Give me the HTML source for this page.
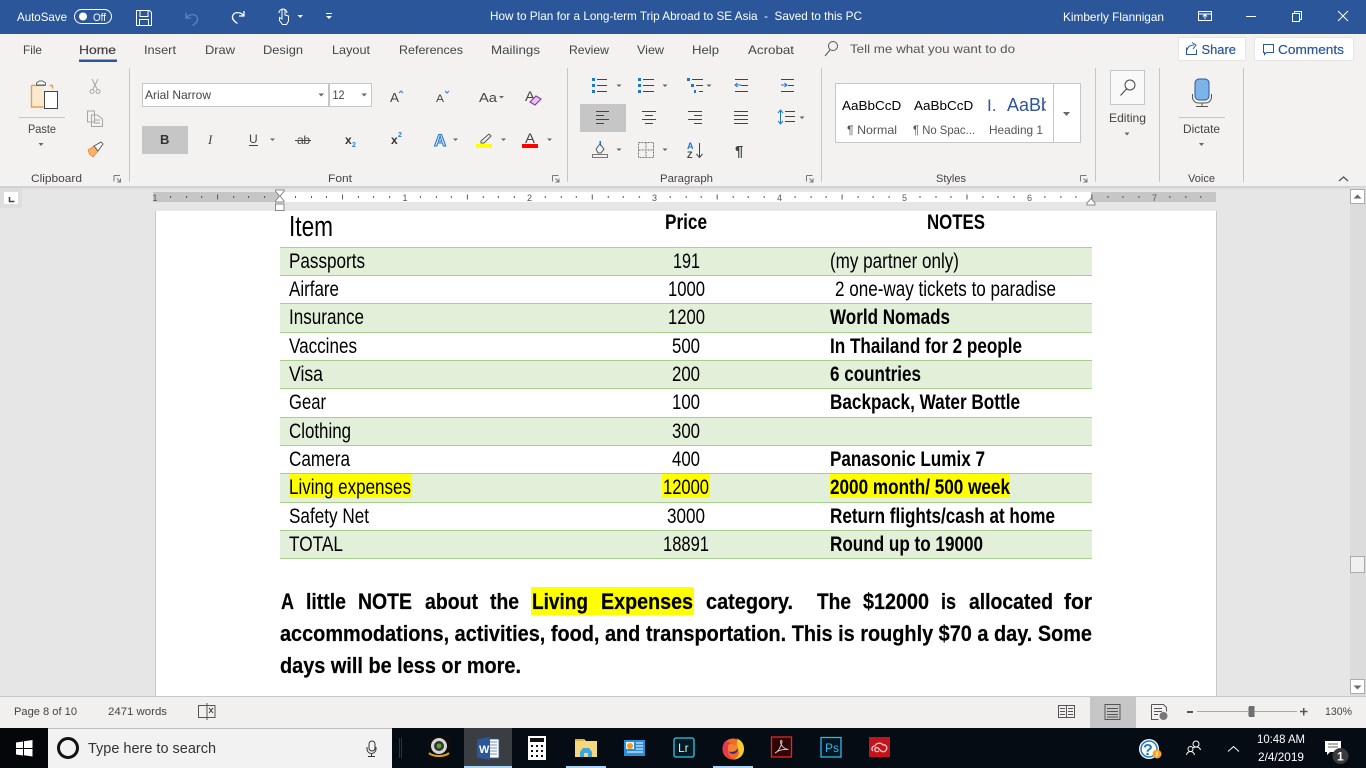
<!DOCTYPE html>
<html lang="en"><head><meta charset="utf-8"><title>Word</title>
<style>
html,body{margin:0;padding:0;width:1366px;height:768px;overflow:hidden;background:#e6e6e6}
svg{display:block;position:absolute;left:0;top:0}
text{font-family:"Liberation Sans",sans-serif;white-space:pre}
.r{font-size:12px;fill:#444}
.w{font-size:12px;fill:#fff}
.g{font-size:11px;fill:#444}
.d{font-family:"Liberation Sans Narrow","Liberation Sans",sans-serif;font-size:21px;fill:#000}
.b{font-weight:bold}
.p{font-size:22px;stroke:#000;stroke-width:.2}
.rn{font-size:9px;fill:#555}
.ic{fill:none;stroke:#444;stroke-width:1}
.cr{fill:#666}
</style></head><body>
<svg width="1366" height="768" viewBox="0 0 1366 768" xmlns="http://www.w3.org/2000/svg">
<defs>
<pattern id="rul" patternUnits="userSpaceOnUse" x="280" y="192" width="124.9" height="10">
<rect x="15" y="4" width="1" height="2" fill="#555"/><rect x="31" y="4" width="1" height="2" fill="#555"/><rect x="46" y="4" width="1" height="2" fill="#555"/>
<rect x="62" y="2.500" width="1" height="5" fill="#555"/>
<rect x="78" y="4" width="1" height="2" fill="#555"/><rect x="93" y="4" width="1" height="2" fill="#555"/><rect x="109" y="4" width="1" height="2" fill="#555"/>
</pattern>
</defs>

<!-- canvas & chrome backgrounds -->
<rect width="1366" height="768" fill="#e6e6e6"/>
<rect width="1366" height="34" fill="#2b579a"/>
<rect y="34" width="1366" height="152" fill="#f3f2f1"/>
<rect y="186" width="1366" height="2" fill="#d2d2d2"/>
<rect y="188" width="1366" height="1" fill="#dcdcdc"/>

<!-- title bar -->
<text class="w" x="17" y="21" textLength="50" lengthAdjust="spacingAndGlyphs">AutoSave</text>
<rect x="74.500" y="9.500" width="37" height="14" rx="7" fill="none" stroke="#fff"/>
<circle cx="83" cy="16.500" r="4" fill="#fff"/>
<text class="w" x="93" y="21" style="font-size:11px" textLength="13" lengthAdjust="spacingAndGlyphs">Off</text>
<path d="M136.500 10.500h13l2 2v13h-15zM140 10.500v6h8v-6M139.500 25.500v-6h9v6" fill="none" stroke="#fff"/>
<path d="M186 13v5h5M186.500 17.500c3-4 10-4 11 1 .5 3-2 5-5 7" fill="none" stroke="#5f83bb" stroke-width="1.300"/>
<path d="M244 11v5h-5M243.500 15.500c-3-4-10-4-11 1-.5 3 2 5 5 7" fill="none" stroke="#fff" stroke-width="1.300"/>
<path d="M282 19v-8.500a1.500 1.500 0 0 1 3 0V15l3.500 1v5l-2 3.500h-4l-3-4v-3zM279 13a4 4 0 1 1 8 0" fill="none" stroke="#fff"/>
<path d="M297.500 15h5.500l-2.700 3z" fill="#fff"/>
<rect x="326" y="13" width="6" height="1" fill="#fff"/><path d="M326 16h6l-3 3z" fill="#fff"/>
<text class="w" x="490" y="20" textLength="372" lengthAdjust="spacingAndGlyphs">How to Plan for a Long-term Trip Abroad to SE Asia  -  Saved to this PC</text>
<text class="w" x="1063" y="21" textLength="101" lengthAdjust="spacingAndGlyphs">Kimberly Flannigan</text>
<path d="M1198.500 11.500h13v9h-13zM1198.500 14h13M1205 19v-4M1203 16.500l2-2 2 2" fill="none" stroke="#fff"/>
<rect x="1246" y="16" width="10" height="1" fill="#fff"/>
<path d="M1292.500 13.500h7v8h-7zM1294.500 13.500v-2h7v8h-2" fill="none" stroke="#fff"/>
<path d="M1338 11l10 10M1348 11l-10 10" stroke="#fff" fill="none"/>

<!-- tabs -->
<text class="r" x="23" y="54" textLength="19" lengthAdjust="spacingAndGlyphs">File</text>
<text class="r" x="79" y="54" textLength="37" lengthAdjust="spacingAndGlyphs" style="stroke:#444;stroke-width:.25">Home</text>
<rect x="79" y="59.500" width="38" height="2.500" fill="#2b579a"/>
<text class="r" x="144" y="54" textLength="32" lengthAdjust="spacingAndGlyphs">Insert</text>
<text class="r" x="205" y="54" textLength="30" lengthAdjust="spacingAndGlyphs">Draw</text>
<text class="r" x="263" y="54" textLength="40" lengthAdjust="spacingAndGlyphs">Design</text>
<text class="r" x="332" y="54" textLength="38" lengthAdjust="spacingAndGlyphs">Layout</text>
<text class="r" x="399" y="54" textLength="64" lengthAdjust="spacingAndGlyphs">References</text>
<text class="r" x="491" y="54" textLength="49" lengthAdjust="spacingAndGlyphs">Mailings</text>
<text class="r" x="569" y="54" textLength="40" lengthAdjust="spacingAndGlyphs">Review</text>
<text class="r" x="637" y="54" textLength="27" lengthAdjust="spacingAndGlyphs">View</text>
<text class="r" x="692" y="54" textLength="27" lengthAdjust="spacingAndGlyphs">Help</text>
<text class="r" x="748" y="54" textLength="46" lengthAdjust="spacingAndGlyphs">Acrobat</text>
<circle cx="833" cy="46" r="4.500" fill="none" stroke="#555"/><path d="M830 50l-5 6" stroke="#555" fill="none"/>
<text class="r" x="850" y="53" textLength="165" lengthAdjust="spacingAndGlyphs" style="fill:#555">Tell me what you want to do</text>
<rect x="1178.500" y="37.500" width="67" height="23" rx="1" fill="#fff" stroke="#e6e5e3"/>
<path d="M1186.500 47.500v7h10v-5M1187 50c1-4 4-5 7-5M1192 42.500l4 2.500-3 4" fill="none" stroke="#2b579a"/>
<text class="r" x="1201.500" y="54" textLength="34.500" lengthAdjust="spacingAndGlyphs" style="fill:#2b579a;font-size:13px;stroke:#2b579a;stroke-width:.2">Share</text>
<rect x="1254.500" y="37.500" width="99" height="23" rx="1" fill="#fff" stroke="#e6e5e3"/>
<path d="M1263.500 44.500h10v8h-7l-2 2v-2h-1z" fill="none" stroke="#2b579a"/>
<text class="r" x="1278" y="54" textLength="66" lengthAdjust="spacingAndGlyphs" style="fill:#2b579a;font-size:13px;stroke:#2b579a;stroke-width:.2">Comments</text>

<!-- ribbon separators -->
<g fill="#c6c6c6">
<rect x="129" y="68" width="1" height="114"/>
<rect x="567" y="68" width="1" height="114"/>
<rect x="821" y="68" width="1" height="114"/>
<rect x="1095" y="68" width="1" height="114"/>
<rect x="1159" y="68" width="1" height="114"/>
<rect x="1243" y="68" width="1" height="114"/>
</g>

<!-- clipboard -->
<path d="M31.500 85.500h6M49.500 85.500h3v3M31.500 85.500v21.500h12" fill="none" stroke="#e8a243" stroke-width="1.500"/>
<rect x="33" y="87" width="11" height="19" fill="#fbe9cb"/>
<path d="M36.500 85v-2l3-2h3l3 2v2zM36.500 85.500h9" fill="#fff" stroke="#666"/>
<rect x="44.500" y="91.500" width="13" height="17" fill="#fff" stroke="#444"/>
<rect x="19" y="117" width="46" height="1" fill="#c6c6c6"/>
<text class="r" x="28" y="133" textLength="28" lengthAdjust="spacingAndGlyphs">Paste</text>
<path class="cr" d="M38.500 143h5l-2.500 3z"/>
<path d="M92 79l5 10M98 79l-5 10" stroke="#a6a6a6" fill="none"/><circle cx="92" cy="91.500" r="2" fill="none" stroke="#a6a6a6"/><circle cx="98" cy="91.500" r="2" fill="none" stroke="#a6a6a6"/>
<path d="M87.500 111h7v11h-7zM91.500 115h6l5 4v7.500h-11z" fill="#f3f2f1" stroke="#a6a6a6"/><path d="M94 120h6M94 123h6" stroke="#a6a6a6"/>
<path d="M88 150l6-4 4 5-5 6-2-2-1 0-1-2z" fill="#f6b26b" stroke="#e98a2a" stroke-width=".8"/><path d="M94 146l7-4 2 2-5 7z" fill="#fff" stroke="#444" stroke-width=".8"/>
<text class="g" x="31" y="182" textLength="51" lengthAdjust="spacingAndGlyphs">Clipboard</text>
<path d="M114 175.500h6M114 175.500v6M117 178.500l3.500 3.500m0-3.500v3.500h-3.500" fill="none" stroke="#777"/>

<!-- font -->
<rect x="142.500" y="83.500" width="186" height="23" fill="#fff" stroke="#c6c6c6"/>
<rect x="329.500" y="83.500" width="42" height="23" fill="#fff" stroke="#c6c6c6"/>
<text class="r" x="145" y="99" textLength="66" lengthAdjust="spacingAndGlyphs">Arial Narrow</text>
<path class="cr" d="M318.500 93.500h5.500l-2.800 3z"/>
<text class="r" x="332.500" y="99" textLength="12" lengthAdjust="spacingAndGlyphs">12</text>
<path class="cr" d="M361.500 93.500h5.500l-2.800 3z"/>
<text class="r" x="390" y="102" style="font-size:13px" textLength="9" lengthAdjust="spacingAndGlyphs">A</text><path d="M399 93l2-2 2 2" fill="none" stroke="#2b7cd3"/>
<text class="r" x="436" y="102" style="font-size:11px" textLength="8" lengthAdjust="spacingAndGlyphs">A</text><path d="M445 91l2 2 2-2" fill="none" stroke="#2b7cd3"/>
<text class="r" x="479" y="102" style="font-size:13px" textLength="18" lengthAdjust="spacingAndGlyphs">Aa</text><path class="cr" d="M499 96h5l-2.500 2.500z"/>
<text class="r" x="525" y="101" style="font-size:14px" textLength="10" lengthAdjust="spacingAndGlyphs">A</text><path d="M530 102l6-6 5 3-6 6z" fill="#e8c6ee" stroke="#8e3ba8" stroke-width="1.200"/>
<rect x="142" y="126" width="46" height="28" fill="#c6c6c6"/>
<text x="160" y="144" style="font-size:13px;font-weight:bold;fill:#333">B</text>
<text x="208" y="144" style="font-size:13px;font-style:italic;fill:#444;font-family:'Liberation Serif',serif">I</text>
<text class="r" x="249" y="143">U</text><rect x="249" y="145" width="9" height="1" fill="#444"/>
<path class="cr" d="M270 138.500h5l-2.500 2.500z"/>
<text class="r" x="297" y="144" textLength="13">ab</text><rect x="295" y="140" width="16" height="1" fill="#444"/>
<text x="345" y="144" style="font-size:12px;font-weight:bold;fill:#333">x</text><text x="352" y="147" style="font-size:7px;font-weight:bold;fill:#2b7cd3">2</text>
<text x="391" y="144" style="font-size:12px;font-weight:bold;fill:#333">x</text><text x="398" y="137" style="font-size:7px;font-weight:bold;fill:#2b7cd3">2</text>
<text x="434" y="146" style="font-size:17px;font-weight:bold;fill:#cfe5f8;stroke:#1f77c9;stroke-width:1">A</text>
<path class="cr" d="M453 138.500h5l-2.500 2.500z"/>
<path d="M481 141l8-7 2 2-7 7h-3z" fill="none" stroke="#555"/>
<rect x="476" y="144" width="16" height="4" fill="#ffff00"/>
<path class="cr" d="M501 138.500h5l-2.500 2.500z"/>
<text class="r" x="525" y="143" style="font-size:14px" textLength="10" lengthAdjust="spacingAndGlyphs">A</text>
<rect x="522" y="144" width="16" height="4" fill="#ff0000"/>
<path class="cr" d="M547 138.500h5l-2.500 2.500z"/>
<text class="g" x="328" y="182" textLength="24" lengthAdjust="spacingAndGlyphs">Font</text>
<path d="M552.500 175.500h6M552.500 175.500v6M555.500 178.500l3.500 3.500m0-3.500v3.500h-3.500" fill="none" stroke="#777"/>

<!-- paragraph row 1 -->
<g fill="#444">
<rect x="597" y="79" width="10" height="1"/><rect x="597" y="85" width="10" height="1"/><rect x="597" y="91" width="10" height="1"/>
<rect x="643" y="79" width="11" height="1"/><rect x="643" y="85" width="11" height="1"/><rect x="643" y="91" width="11" height="1"/>
<rect x="692" y="79" width="11" height="1"/><rect x="696" y="85" width="7" height="1"/><rect x="699" y="91" width="4" height="1"/>
<rect x="735" y="79" width="13" height="1"/><rect x="741" y="85" width="7" height="1"/><rect x="735" y="91" width="13" height="1"/>
<rect x="781" y="79" width="13" height="1"/><rect x="788" y="85" width="6" height="1"/><rect x="781" y="91" width="13" height="1"/>
</g>
<g fill="#1f77c9">
<rect x="592" y="78" width="3" height="3"/><rect x="592" y="84" width="3" height="3"/><rect x="592" y="90" width="3" height="3"/>
<rect x="638" y="78" width="3" height="3"/><rect x="638" y="84" width="3" height="3"/><rect x="638" y="90" width="3" height="3"/>
<rect x="687" y="78" width="3" height="3"/><rect x="691" y="84" width="3" height="3"/><rect x="694" y="90" width="2" height="3"/>
</g>
<path d="M741 85h-6M737.500 83l-2.500 2 2.500 2M781 85h6M784.500 83l2.500 2-2.500 2" stroke="#1f77c9" fill="none"/>
<g class="cr"><path d="M616.500 84.500h5l-2.500 2.500zM662.500 84.500h5l-2.500 2.500zM706.500 84.500h5l-2.500 2.500zM799.500 116.500h5l-2.500 2.500zM616.500 148.500h5l-2.500 2.500zM662.500 148.500h5l-2.500 2.500z"/></g>
<!-- paragraph row 2 -->
<rect x="580" y="104" width="46" height="28" fill="#c6c6c6"/>
<g fill="#444">
<rect x="596" y="111" width="13" height="1"/><rect x="596" y="115" width="8" height="1"/><rect x="596" y="119" width="13" height="1"/><rect x="596" y="123" width="8" height="1"/>
<rect x="642" y="111" width="14" height="1"/><rect x="645" y="115" width="8" height="1"/><rect x="642" y="119" width="14" height="1"/><rect x="645" y="123" width="8" height="1"/>
<rect x="688" y="111" width="14" height="1"/><rect x="694" y="115" width="8" height="1"/><rect x="688" y="119" width="14" height="1"/><rect x="694" y="123" width="8" height="1"/>
<rect x="734" y="111" width="14" height="1"/><rect x="734" y="115" width="14" height="1"/><rect x="734" y="119" width="14" height="1"/><rect x="734" y="123" width="14" height="1"/>
<rect x="785" y="111" width="10" height="1"/><rect x="785" y="116" width="10" height="1"/><rect x="785" y="121" width="10" height="1"/>
</g>
<path d="M780.500 111v12M778 113l2.500-3 2.500 3M778 121l2.500 3 2.500-3" stroke="#1f77c9" fill="none"/>
<!-- paragraph row 3 -->
<path d="M596 149l4-5 4 5-3 4h-3zM600 144v-3" fill="none" stroke="#555"/><path d="M600.500 146v-5" stroke="#1f77c9"/>
<rect x="592.500" y="154.500" width="15" height="3" fill="#f3f2f1" stroke="#777"/>
<path d="M638.500 142.500h15v15h-15zM646 142.500v15M638.500 150h15" fill="none" stroke="#777" stroke-dasharray="2 1"/>
<text x="687" y="149" style="font-size:9px;font-weight:bold;fill:#1f77c9">A</text><text x="687" y="158" style="font-size:9px;font-weight:bold;fill:#444">Z</text>
<path d="M699.500 143v14M696.500 154l3 3.500 3-3.500" stroke="#444" fill="none"/>
<text x="735" y="156" style="font-size:15px;font-weight:bold;fill:#444">¶</text>
<text class="g" x="660" y="182" textLength="53" lengthAdjust="spacingAndGlyphs">Paragraph</text>
<path d="M806.500 175.500h6M806.500 175.500v6M809.500 178.500l3.500 3.500m0-3.500v3.500h-3.500" fill="none" stroke="#777"/>

<!-- styles -->
<rect x="835.500" y="83.500" width="245" height="59" fill="#fff" stroke="#c6c6c6"/>
<text x="842" y="110" style="font-size:13px;fill:#000" textLength="66" lengthAdjust="spacingAndGlyphs">AaBbCcDc</text>
<rect x="901.500" y="96" width="12" height="18" fill="#fff"/>
<text x="914" y="110" style="font-size:13px;fill:#000" textLength="66" lengthAdjust="spacingAndGlyphs">AaBbCcDc</text>
<rect x="973.500" y="96" width="13" height="18" fill="#fff"/>
<text x="987" y="111" style="font-size:17px;fill:#2f5496">I.</text>
<text x="1007" y="111" style="font-size:18px;fill:#2f5496" textLength="44" lengthAdjust="spacingAndGlyphs">AaBb</text>
<rect x="1046" y="90" width="7" height="30" fill="#fff"/>
<rect x="1053" y="84" width="1" height="58" fill="#c6c6c6"/>
<text class="r" x="847" y="134" textLength="50" lengthAdjust="spacingAndGlyphs" style="fill:#555">¶ Normal</text>
<text class="r" x="913" y="134" textLength="62" lengthAdjust="spacingAndGlyphs" style="fill:#555">¶ No Spac...</text>
<text class="r" x="989" y="134" textLength="54" lengthAdjust="spacingAndGlyphs" style="fill:#555">Heading 1</text>
<path class="cr" d="M1063 112h7l-3.500 4z"/>
<text class="g" x="936" y="182" textLength="30" lengthAdjust="spacingAndGlyphs">Styles</text>
<path d="M1080.500 175.500h6M1080.500 175.500v6M1083.500 178.500l3.500 3.500m0-3.500v3.500h-3.500" fill="none" stroke="#777"/>

<!-- editing -->
<rect x="1110.500" y="70.500" width="34" height="34" fill="#f9f9f9" stroke="#c6c6c6"/>
<circle cx="1130" cy="85" r="5" fill="none" stroke="#444"/><path d="M1126.500 89l-6 6.500" stroke="#444" fill="none"/>
<text class="r" x="1109" y="122" textLength="37" lengthAdjust="spacingAndGlyphs">Editing</text>
<path class="cr" d="M1124.500 132.500h5l-2.500 3z"/>
<!-- voice -->
<rect x="1195" y="79" width="14" height="21" rx="4" fill="#7cb4ea" stroke="#2b579a"/>
<path d="M1192.500 94v3a6 6 0 0 0 6 6h7a6 6 0 0 0 6-6v-3M1202 103v3M1196 106.500h12" fill="none" stroke="#555"/>
<rect x="1179" y="117" width="46" height="1" fill="#c6c6c6"/>
<text class="r" x="1183" y="133" textLength="37" lengthAdjust="spacingAndGlyphs">Dictate</text>
<path class="cr" d="M1199 143h5l-2.500 3z"/>
<text class="g" x="1188" y="182" textLength="27" lengthAdjust="spacingAndGlyphs">Voice</text>
<path d="M1339 181l4.500-4 4.500 4" fill="none" stroke="#555" stroke-width="1.300"/>

<!-- ruler -->
<rect x="0" y="188" width="22" height="20" fill="#dedede"/>
<rect x="4" y="192" width="14" height="12" fill="#fff"/>
<path d="M9.500 197v4.500h5" fill="none" stroke="#444" stroke-width="1.500"/>
<rect x="153" y="192" width="1063" height="10" fill="#fff"/>
<rect x="153" y="192" width="127" height="10" fill="#c6c6c6"/>
<rect x="1091" y="192" width="125" height="10" fill="#c6c6c6"/>
<rect x="153" y="192" width="1063" height="10" fill="url(#rul)"/>
<text class="rn" x="152.500" y="201">1</text><text class="rn" x="402.500" y="201">1</text><text class="rn" x="527" y="201">2</text><text class="rn" x="652" y="201">3</text><text class="rn" x="777" y="201">4</text><text class="rn" x="902" y="201">5</text><text class="rn" x="1027" y="201">6</text><text class="rn" x="1152" y="201">7</text>
<path d="M275.500 190h8.500v1.500l-4 4.500 4 5v1h-8.500v-1l4-5-4-4.500z" fill="#fff" stroke="#888"/>
<rect x="275.500" y="204" width="8.500" height="6.500" fill="#fff" stroke="#888"/>
<path d="M1087 205v-2l4-4.500 4 4.500v2z" fill="#fff" stroke="#888"/>

<!-- page -->
<rect x="155" y="211" width="1" height="485" fill="#c6c6c6"/>
<rect x="156" y="211" width="1060" height="485" fill="#fff"/>
<rect x="1216" y="211" width="1" height="485" fill="#c6c6c6"/>

<!-- table stripes -->
<g fill="#e2efd9">
<rect x="280" y="247" width="812" height="28"/>
<rect x="280" y="304" width="812" height="28"/>
<rect x="280" y="360" width="812" height="28"/>
<rect x="280" y="417" width="812" height="28"/>
<rect x="280" y="473" width="812" height="29"/>
<rect x="280" y="530" width="812" height="28"/>
</g>
<g fill="#a8d08d">
<rect x="280" y="247" width="812" height="1"/><rect x="280" y="275" width="812" height="1"/><rect x="280" y="303" width="812" height="1"/><rect x="280" y="332" width="812" height="1"/><rect x="280" y="360" width="812" height="1"/><rect x="280" y="388" width="812" height="1"/><rect x="280" y="417" width="812" height="1"/><rect x="280" y="445" width="812" height="1"/><rect x="280" y="473" width="812" height="1"/><rect x="280" y="502" width="812" height="1"/><rect x="280" y="530" width="812" height="1"/><rect x="280" y="558" width="812" height="1"/>
</g>
<g fill="#ffff00">
<rect x="289" y="474" width="123" height="24"/><rect x="662" y="474" width="48" height="24"/><rect x="830" y="474" width="180" height="24"/>
<rect x="531" y="587" width="163" height="28"/>
</g>

<!-- table text -->
<text class="d" x="289" y="236" style="font-size:29px" textLength="44" lengthAdjust="spacingAndGlyphs">Item</text>
<text class="d b" x="665" y="229" textLength="42" lengthAdjust="spacingAndGlyphs">Price</text>
<text class="d b" x="927" y="229" textLength="58" lengthAdjust="spacingAndGlyphs">NOTES</text>

<text class="d" x="289" y="268" textLength="76" lengthAdjust="spacingAndGlyphs">Passports</text>
<text class="d" x="289" y="296" textLength="50" lengthAdjust="spacingAndGlyphs">Airfare</text>
<text class="d" x="289" y="324" textLength="75" lengthAdjust="spacingAndGlyphs">Insurance</text>
<text class="d" x="289" y="353" textLength="68" lengthAdjust="spacingAndGlyphs">Vaccines</text>
<text class="d" x="289" y="381" textLength="34" lengthAdjust="spacingAndGlyphs">Visa</text>
<text class="d" x="289" y="409" textLength="37" lengthAdjust="spacingAndGlyphs">Gear</text>
<text class="d" x="289" y="438" textLength="62" lengthAdjust="spacingAndGlyphs">Clothing</text>
<text class="d" x="289" y="466" textLength="61" lengthAdjust="spacingAndGlyphs">Camera</text>
<text class="d" x="289" y="494" textLength="122" lengthAdjust="spacingAndGlyphs">Living expenses</text>
<text class="d" x="289" y="523" textLength="80" lengthAdjust="spacingAndGlyphs">Safety Net</text>
<text class="d" x="289" y="551" textLength="54" lengthAdjust="spacingAndGlyphs">TOTAL</text>

<text class="d" x="673" y="268" textLength="27" lengthAdjust="spacingAndGlyphs">191</text>
<text class="d" x="668" y="296" textLength="37" lengthAdjust="spacingAndGlyphs">1000</text>
<text class="d" x="668" y="324" textLength="37" lengthAdjust="spacingAndGlyphs">1200</text>
<text class="d" x="672" y="353" textLength="28" lengthAdjust="spacingAndGlyphs">500</text>
<text class="d" x="672" y="381" textLength="28" lengthAdjust="spacingAndGlyphs">200</text>
<text class="d" x="672" y="409" textLength="28" lengthAdjust="spacingAndGlyphs">100</text>
<text class="d" x="672" y="438" textLength="28" lengthAdjust="spacingAndGlyphs">300</text>
<text class="d" x="672" y="466" textLength="28" lengthAdjust="spacingAndGlyphs">400</text>
<text class="d" x="663" y="494" textLength="46" lengthAdjust="spacingAndGlyphs">12000</text>
<text class="d" x="667" y="523" textLength="38" lengthAdjust="spacingAndGlyphs">3000</text>
<text class="d" x="663" y="551" textLength="46" lengthAdjust="spacingAndGlyphs">18891</text>

<text class="d" x="830" y="268" textLength="129" lengthAdjust="spacingAndGlyphs">(my partner only)</text>
<text class="d" x="835" y="296" textLength="221" lengthAdjust="spacingAndGlyphs">2 one-way tickets to paradise</text>
<text class="d b" x="830" y="324" textLength="120" lengthAdjust="spacingAndGlyphs">World Nomads</text>
<text class="d b" x="830" y="353" textLength="192" lengthAdjust="spacingAndGlyphs">In Thailand for 2 people</text>
<text class="d b" x="830" y="381" textLength="91" lengthAdjust="spacingAndGlyphs">6 countries</text>
<text class="d b" x="830" y="409" textLength="190" lengthAdjust="spacingAndGlyphs">Backpack, Water Bottle</text>
<text class="d b" x="830" y="466" textLength="155" lengthAdjust="spacingAndGlyphs">Panasonic Lumix 7</text>
<text class="d b" x="830" y="494" textLength="180" lengthAdjust="spacingAndGlyphs">2000 month/ 500 week</text>
<text class="d b" x="830" y="523" textLength="225" lengthAdjust="spacingAndGlyphs">Return flights/cash at home</text>
<text class="d b" x="830" y="551" textLength="153" lengthAdjust="spacingAndGlyphs">Round up to 19000</text>

<!-- paragraph -->
<g>
<text class="d b p" x="281" y="609" textLength="13" lengthAdjust="spacingAndGlyphs">A</text>
<text class="d b p" x="306" y="609" textLength="40" lengthAdjust="spacingAndGlyphs">little</text>
<text class="d b p" x="358" y="609" textLength="54" lengthAdjust="spacingAndGlyphs">NOTE</text>
<text class="d b p" x="425" y="609" textLength="53" lengthAdjust="spacingAndGlyphs">about</text>
<text class="d b p" x="490" y="609" textLength="29" lengthAdjust="spacingAndGlyphs">the</text>
<text class="d b p" x="532" y="609" textLength="56" lengthAdjust="spacingAndGlyphs">Living</text>
<text class="d b p" x="601" y="609" textLength="92" lengthAdjust="spacingAndGlyphs">Expenses</text>
<text class="d b p" x="706" y="609" textLength="87" lengthAdjust="spacingAndGlyphs">category.</text>
<text class="d b p" x="817" y="609" textLength="34" lengthAdjust="spacingAndGlyphs">The</text>
<text class="d b p" x="863" y="609" textLength="66" lengthAdjust="spacingAndGlyphs">$12000</text>
<text class="d b p" x="941" y="609" textLength="15" lengthAdjust="spacingAndGlyphs">is</text>
<text class="d b p" x="969" y="609" textLength="84" lengthAdjust="spacingAndGlyphs">allocated</text>
<text class="d b p" x="1064" y="609" textLength="28" lengthAdjust="spacingAndGlyphs">for</text>
</g>
<text class="d b p" x="280" y="641" textLength="812" lengthAdjust="spacingAndGlyphs">accommodations, activities, food, and transportation. This is roughly $70 a day. Some</text>
<text class="d b p" x="280" y="673" textLength="241" lengthAdjust="spacingAndGlyphs">days will be less or more.</text>

<!-- scrollbar -->
<rect x="1350" y="187" width="16" height="509" fill="#dcdcdc"/>
<rect x="1350.500" y="189.500" width="14" height="14" fill="#fff" stroke="#ababab"/>
<path d="M1353.500 198.500l4-4 4 4z" fill="#6a6a6a"/>
<rect x="1350.500" y="556.500" width="14" height="16" fill="#f0f0f0" stroke="#ababab"/>
<rect x="1350.500" y="679.500" width="14" height="14" fill="#fff" stroke="#ababab"/>
<path d="M1353.500 685.500h8l-4 4z" fill="#6a6a6a"/>

<!-- status bar -->
<rect y="696" width="1366" height="32" fill="#f1f0ee"/>
<rect y="696" width="1366" height="1" fill="#c8c8c6"/>
<text class="g" x="14" y="715" textLength="63" lengthAdjust="spacingAndGlyphs">Page 8 of 10</text>
<text class="g" x="108" y="715" textLength="59" lengthAdjust="spacingAndGlyphs">2471 words</text>
<path d="M207 705.500h-8.500v12H207M207 703v17M207 705.500h8v12h-8" fill="none" stroke="#555"/><path d="M209 708l4 5M213 708l-4 5" stroke="#333" fill="none"/>
<path d="M1058.500 705.500h8v12h-8zM1066.500 705.500h8v12h-8zM1060 708.500h5M1060 711.500h5M1060 714.500h5M1068 708.500h5M1068 711.500h5M1068 714.500h5" fill="none" stroke="#555"/>
<rect x="1090" y="697" width="46" height="31" fill="#c6c6c6"/>
<path d="M1105 704.500h15v15h-15zM1107 708.500h11M1107 711.500h11M1107 714.500h11M1107 717h11" fill="none" stroke="#555"/>
<path d="M1151.500 704.500h12l3 3v4M1151.500 704.500v15h7M1154 708.500h8M1154 711.500h8M1154 714.500h4" fill="none" stroke="#555"/><circle cx="1163.500" cy="716" r="4" fill="#777"/>
<rect x="1187" y="711" width="6" height="2" fill="#555"/>
<rect x="1197" y="711" width="100" height="1" fill="#a8a8a8"/>
<rect x="1248" y="707" width="1" height="9" fill="#a8a8a8"/>
<rect x="1249" y="706" width="5.500" height="11" fill="#6f6f6f"/>
<path d="M1300 711.500h7.500M1303.750 708v7.500" stroke="#555" stroke-width="1.500" fill="none"/>
<text class="g" x="1325" y="715" textLength="27" lengthAdjust="spacingAndGlyphs">130%</text>

<!-- taskbar -->
<rect y="728" width="1366" height="40" fill="#060c14"/>
<rect y="728" width="48" height="40" fill="#04060a"/>
<path d="M16 742.500l7-1v6.500h-7zM24 741.300l8.500-1.300v8h-8.500zM16 749h7v6.500l-7-1zM24 749h8.500v7.500l-8.500-1.300z" fill="#fff"/>
<rect x="48" y="728" width="344" height="40" fill="#f2f2f2"/>
<rect x="48" y="728" width="344" height="1" fill="#bcbcbc"/>
<circle cx="68" cy="748" r="9.500" fill="none" stroke="#111" stroke-width="3"/>
<text x="88" y="753" style="font-size:15px;fill:#333" textLength="128" lengthAdjust="spacingAndGlyphs">Type here to search</text>
<rect x="369" y="741" width="6" height="10" rx="3" fill="none" stroke="#333"/><path d="M367 747v2a4.500 4.500 0 0 0 9 0v-2M371.500 754v2M368 756.500h7" fill="none" stroke="#333"/>
<rect x="399" y="738" width="1" height="20" fill="#333"/><rect x="401" y="738" width="1" height="20" fill="#333"/>
<!-- camera -->
<rect x="427" y="736" width="24" height="24" rx="3" fill="#0c0c0c"/>
<circle cx="439" cy="746" r="8" fill="#d6d6d6"/><circle cx="439" cy="746" r="5" fill="#333"/><circle cx="439" cy="746" r="2.500" fill="#5aa02c"/>
<path d="M429 753c4 4 16 4 20 0" fill="none" stroke="#e0a020" stroke-width="2"/>
<!-- word -->
<rect x="464" y="728" width="48" height="38" fill="#3a3d42"/>
<rect x="464" y="766" width="48" height="2" fill="#a8d5f5"/>
<rect x="485" y="739" width="14" height="19" fill="#fff" stroke="#2b579a" stroke-width=".8"/>
<path d="M487 742h10M487 745h10M487 748h10M487 751h10M487 754h10" stroke="#6d8fc4"/>
<path d="M477 739.500l13-2.500v23l-13-2.500z" fill="#2b579a"/>
<text x="479" y="753" style="font-size:11px;font-weight:bold;fill:#fff">W</text>
<!-- calc -->
<rect x="528" y="736" width="18" height="24" fill="#fff"/><rect x="530" y="738" width="14" height="4" fill="#111"/>
<g fill="#111"><rect x="531" y="745" width="2" height="2"/><rect x="536" y="745" width="2" height="2"/><rect x="541" y="745" width="2" height="2"/><rect x="531" y="750" width="2" height="2"/><rect x="536" y="750" width="2" height="2"/><rect x="541" y="750" width="2" height="2"/><rect x="531" y="755" width="2" height="2"/><rect x="536" y="755" width="2" height="2"/><rect x="541" y="755" width="2" height="2"/></g>
<!-- explorer -->
<path d="M575 739h9l2 2h11v16h-22z" fill="#f5d77e"/><rect x="575" y="739" width="9" height="2" fill="#e0b23a"/>
<path d="M580 757v-5l3-4h6l3 4v5h-4v-4h-4v4z" fill="#3ea6dc"/>
<rect x="566" y="766" width="40" height="2" fill="#a8d5f5"/>
<!-- control panel -->
<rect x="624" y="740" width="21" height="16" fill="#2b8fd6"/><rect x="626" y="742" width="8" height="7" fill="#f0f5fa"/><circle cx="630" cy="746" r="3" fill="#f39a1f"/><path d="M636 743h7M636 746h7M636 749h7M627 752h16" stroke="#fff"/>
<!-- Lr -->
<rect x="674" y="738" width="20" height="19" rx="2" fill="#031a1f" stroke="#31c5f0" stroke-width="1.300"/>
<text x="678" y="752" style="font-size:12px;fill:#c9f1fb">Lr</text>
<!-- firefox -->
<circle cx="733" cy="749" r="10.500" fill="#f26a22"/>
<path d="M733 738c7 0 11.500 5 11 12-.6 6-5.500 9.500-11 9.500 7-2 7-8 4-12-.5-4 0-7 1-9z" fill="#ffca2c"/>
<path d="M725 741c-3 4-3 9-1 12 2 4 6 6 9 6-3-2-5-5-5-8 0-3 1-6 3-8z" fill="#e2256a" opacity=".75"/>
<circle cx="733" cy="749" r="5" fill="#3b2a8c"/><path d="M728 745c4-2 9-1 10 3-2 4-7 5-10 3z" fill="#f7812b"/>
<rect x="713" y="766" width="40" height="2" fill="#a8d5f5"/>
<!-- acrobat -->
<rect x="771.500" y="737" width="20" height="20" fill="#2e0504" stroke="#e5261f" stroke-width="1.300"/>
<path d="M775 753c3-1 6-6 7-11 0-2-1.500-2-1.500 0 .5 4 4 7 8 7.500-4-.5-9 0-13.500 3.500z" fill="none" stroke="#d9c6c6"/>
<!-- Ps -->
<rect x="821" y="737.500" width="20" height="19.500" fill="#02161f" stroke="#31b6ee" stroke-width="1.300"/>
<text x="825" y="752" style="font-size:12px;fill:#31b6ee">Ps</text>
<!-- CC -->
<rect x="869" y="737" width="21" height="20" fill="#c4131a"/>
<path d="M873 751c-2-2-1-5 2-5 1-3 6-4 8-1 3-1 5 3 3 5-1 2-3 2-5 1l-3-3c-1-1-4 0-3 2 0 2 2 2 4 1" fill="none" stroke="#f5c6c8" stroke-width="1.300"/>
<!-- tray -->
<circle cx="1149" cy="749" r="10" fill="#fff"/><circle cx="1149" cy="749" r="8" fill="#fff" stroke="#1f77c9" stroke-width="1.500"/>
<text x="1143" y="755" style="font-size:16px;font-weight:bold;fill:#1f77c9">?</text>
<circle cx="1157" cy="754" r="4.500" fill="#f5a623"/><rect x="1156.500" y="751.500" width="1" height="5" fill="#fff"/>
<circle cx="1196" cy="744" r="3" fill="none" stroke="#fff"/><path d="M1191 751c1-3 3-4 5-4s4 1 4.500 3" fill="none" stroke="#fff"/>
<circle cx="1190.500" cy="749" r="2.500" fill="#060c14" stroke="#fff"/><path d="M1186.500 755c.5-2.500 2-3.500 4-3.500s3.500 1 4 3.500" fill="none" stroke="#fff"/>
<path d="M1228 751.500l5.500-5 5.500 5" fill="none" stroke="#fff"/>
<text class="w" x="1257" y="743" textLength="48" lengthAdjust="spacingAndGlyphs">10:48 AM</text>
<text class="w" x="1258" y="761" textLength="46" lengthAdjust="spacingAndGlyphs">2/4/2019</text>
<path d="M1325 741h16v11h-11l-3 3v-3h-2z" fill="#fff"/><path d="M1328 744h10M1328 747h10" stroke="#666"/>
<circle cx="1340.500" cy="756" r="8" fill="#3a3a3a"/>
<text x="1337" y="760.500" style="font-size:12px;font-weight:bold;fill:#fff">1</text>
</svg>
</body></html>
